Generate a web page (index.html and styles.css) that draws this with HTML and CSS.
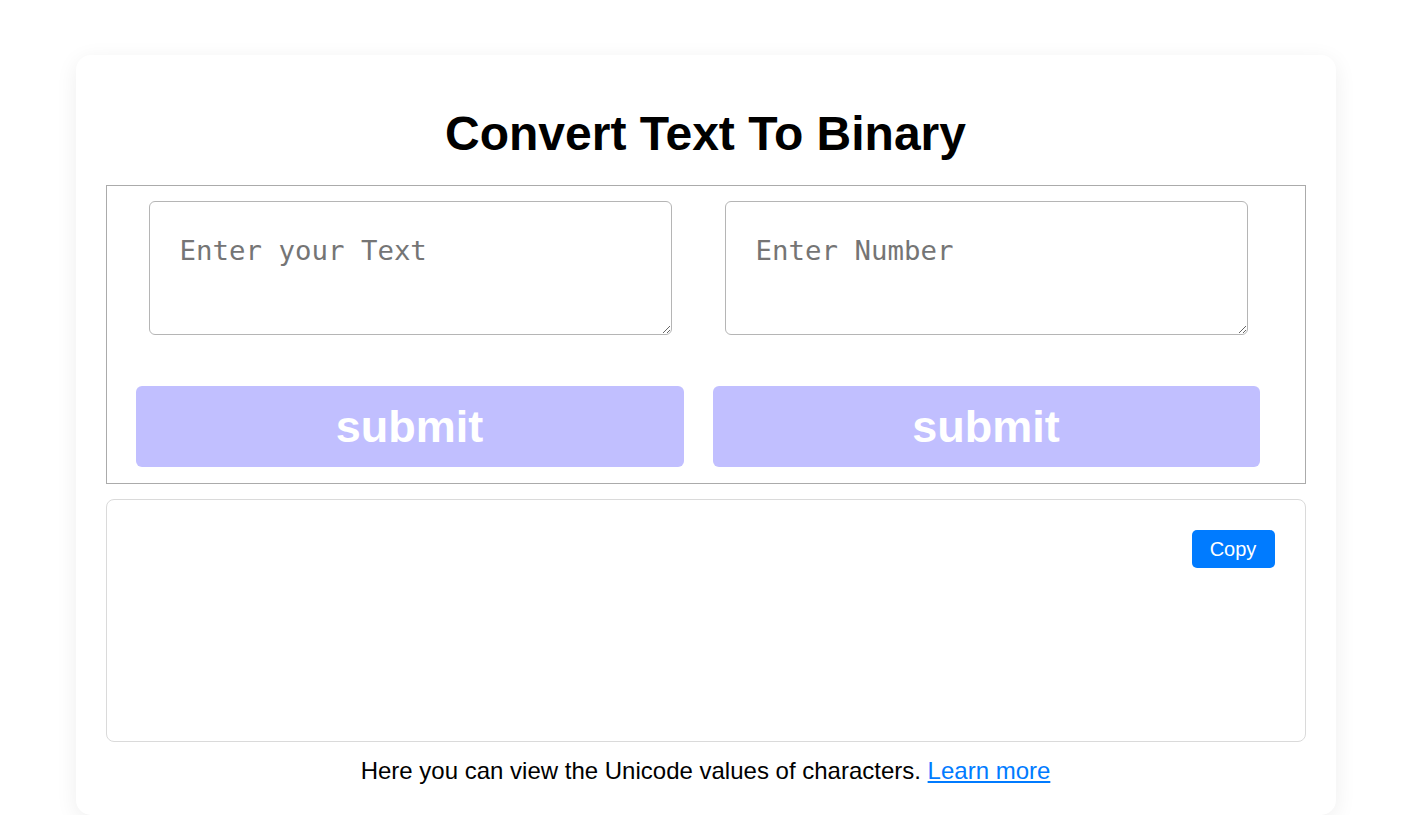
FILE: index.html
```html
<!DOCTYPE html>
<html lang="en">
<head>
<meta charset="utf-8">
<title>Convert Text To Binary</title>
<link rel="stylesheet" href="styles.css">
</head>
<body>
  <main class="card">
    <h1 class="title">Convert Text To Binary</h1>
    <form class="converter">
      <div class="col col-left">
        <textarea class="field" placeholder="Enter your Text"></textarea>
        <button type="button" class="submit">submit</button>
      </div>
      <div class="col col-right">
        <textarea class="field" placeholder="Enter Number"></textarea>
        <button type="button" class="submit">submit</button>
      </div>
    </form>
    <section class="result">
      <button type="button" class="copy">Copy</button>
    </section>
    <p class="note">Here you can view the Unicode values of characters. <a href="#" class="link">Learn more</a></p>
  </main>
</body>
</html>
```

FILE: styles.css
```css
html, body {
  margin: 0;
  padding: 0;
  background: #ffffff;
}

body {
  font-family: "Liberation Sans", Arial, sans-serif;
  color: #000;
}

.card {
  box-sizing: border-box;
  width: 1260px;
  margin: 55px auto 0;
  padding: 30px 30px 31px;
  background: #fff;
  border-radius: 15px;
  box-shadow: 0 5px 22px rgba(0, 0, 0, 0.07);
}

.title {
  margin: 22px 0 24px;
  font-size: 48px;
  line-height: 54px;
  font-weight: 700;
  text-align: center;
}

.converter {
  display: flex;
  border: 1px solid #ababab;
  padding: 15px 0 16px 29px;
  gap: 29px;
}

.col {
  display: flex;
  flex-direction: column;
  align-items: flex-start;
  gap: 51px;
}

.col-left {
  width: 548px;
}

.col-right {
  width: 547px;
}

.field {
  box-sizing: border-box;
  width: 523px;
  height: 134px;
  margin: 0 0 0 12px;
  padding: 33px 30px 30px;
  border: 1px solid #b5b5b5;
  border-radius: 6px;
  font-family: "DejaVu Sans Mono", monospace;
  font-size: 27.4px;
  color: #333;
  background: #fff;
}

.col-left .field {
  margin-left: 13px;
}

.field::placeholder {
  color: #757575;
}

.submit {
  width: 100%;
  height: 81px;
  border: none;
  border-radius: 6px;
  background: #c1bfff;
  color: #fff;
  font-family: "Liberation Sans", Arial, sans-serif;
  font-size: 45px;
  font-weight: 700;
  padding: 0;
  cursor: pointer;
}

.result {
  box-sizing: border-box;
  height: 243px;
  margin-top: 15px;
  border: 1px solid #dadada;
  border-radius: 8px;
  padding: 30px 30px 0 0;
  display: flex;
  justify-content: flex-end;
  align-items: flex-start;
}

.copy {
  width: 83px;
  height: 38px;
  border: none;
  border-radius: 5px;
  background: #007bff;
  color: #fff;
  font-family: "Liberation Sans", Arial, sans-serif;
  font-size: 20px;
  padding: 0;
  cursor: pointer;
}

.note {
  margin: 15px 0 0;
  font-size: 24px;
  line-height: 27px;
  text-align: center;
}

.link {
  color: #007bff;
  text-decoration: underline;
}
```
